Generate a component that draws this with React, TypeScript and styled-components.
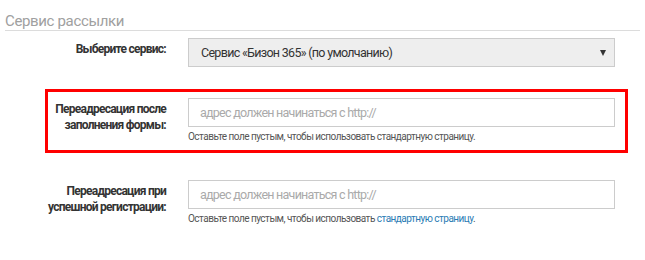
import React from 'react';
import styled, { createGlobalStyle } from 'styled-components';

const GlobalStyle = createGlobalStyle`
  html, body {
    margin: 0;
    padding: 0;
    background: #ffffff;
    font-family: Roboto, 'Liberation Sans', Arial, sans-serif;
  }
`;

const Page = styled.div`
  padding: 12px 0 0 5px;
  width: 640px;
  box-sizing: border-box;
`;

const Legend = styled.div`
  font-size: 15px;
  line-height: 18px;
  letter-spacing: -0.35px;
  color: #a0a0a0;
  border-bottom: 1px solid #dcdcdc;
  margin-bottom: 7px;
`;

const Row = styled.div<{ $highlight?: boolean; $gap?: number }>`
  display: grid;
  grid-template-columns: ${({ $highlight }) => ($highlight ? '118px' : '161px')} 427px;
  column-gap: 22px;
  align-items: start;
  margin-left: ${({ $highlight }) => ($highlight ? '40px' : '0')};
  width: ${({ $highlight }) => ($highlight ? '567px' : 'auto')};
  border: ${({ $highlight }) => ($highlight ? '3px solid #ff0000' : '0')};
  padding: ${({ $highlight }) => ($highlight ? '6px 10px 7px 0' : '0')};
  margin-bottom: ${({ $gap }) => `${$gap ?? 0}px`};
`;

const Label = styled.div`
  text-align: right;
  white-space: nowrap;
  font-size: 12px;
  line-height: 16px;
  font-weight: 700;
  letter-spacing: -0.75px;
  color: #333333;
  padding-top: 3px;
`;

const Control = styled.div`
  display: flex;
  flex-direction: column;
`;

const SelectBox = styled.div`
  position: relative;
  height: 29px;
  box-sizing: border-box;
  border: 1px solid #cccccc;
  background: #eeeeee;
  color: #333333;
  font-size: 12.5px;
  letter-spacing: -0.7px;
  line-height: 27px;
  padding: 0 12px;
`;

const Caret = styled.span`
  position: absolute;
  right: 8px;
  top: 11px;
  width: 0;
  height: 0;
  border-left: 3px solid transparent;
  border-right: 3px solid transparent;
  border-top: 6px solid #333333;
`;

const Input = styled.input`
  height: 29px;
  box-sizing: border-box;
  border: 1px solid #cccccc;
  background: #ffffff;
  font-family: Roboto, 'Liberation Sans', Arial, sans-serif;
  font-size: 12.5px;
  letter-spacing: -0.75px;
  padding: 0 11px;
  outline: none;
  width: 100%;

  &::placeholder {
    color: #aaaaaa;
  }
`;

const Help = styled.div`
  margin-top: 3px;
  font-size: 10px;
  line-height: 13px;
  letter-spacing: -0.52px;
  color: #555555;
`;

const Link = styled.a`
  color: #2a7bb4;
  text-decoration: none;
`;

const App: React.FC = () => {
  return (
    <>
      <GlobalStyle />
      <Page>
        <Legend>Сервис рассылки</Legend>
        <Row $gap={22}>
          <Label>Выберите сервис:</Label>
          <Control>
            <SelectBox>
              Сервис «Бизон 365» (по умолчанию)
              <Caret />
            </SelectBox>
          </Control>
        </Row>
        <Row $highlight $gap={27}>
          <Label>
            Переадресация после
            <br />
            заполнения формы:
          </Label>
          <Control>
            <Input placeholder="адрес должен начинаться с http://" />
            <Help>Оставьте поле пустым, чтобы использовать стандартную страницу.</Help>
          </Control>
        </Row>
        <Row>
          <Label>
            Переадресация при
            <br />
            успешной регистрации:
          </Label>
          <Control>
            <Input placeholder="адрес должен начинаться с http://" />
            <Help>
              Оставьте поле пустым, чтобы использовать <Link href="#">стандартную страницу</Link>.
            </Help>
          </Control>
        </Row>
      </Page>
    </>
  );
};

export default App;
